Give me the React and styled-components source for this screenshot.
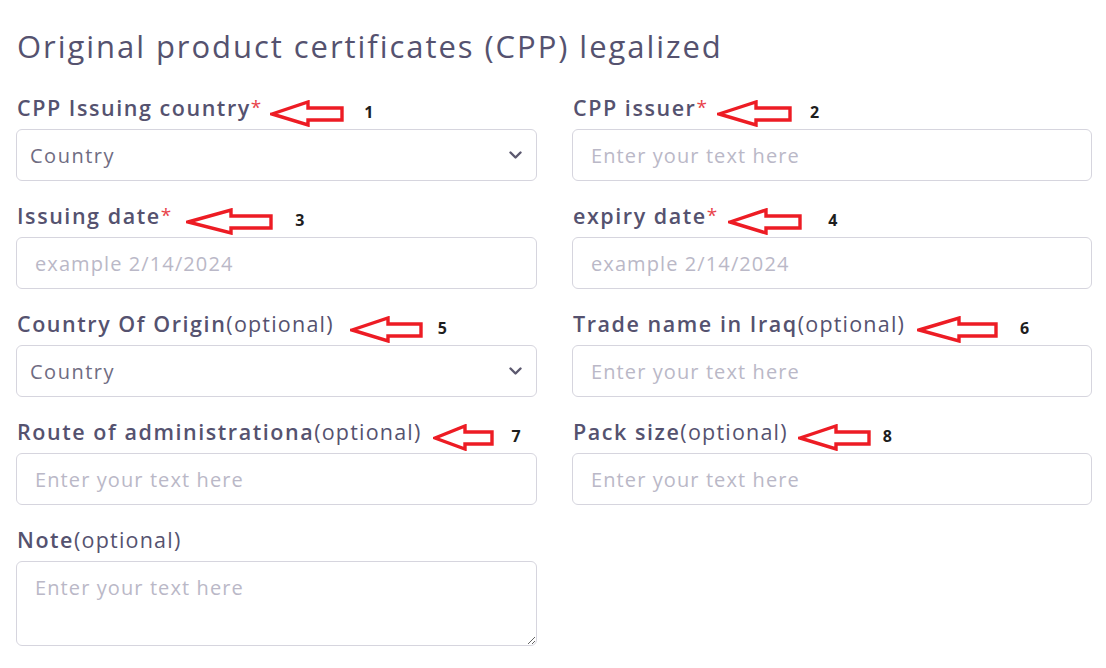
import React from 'react';
import styled, { createGlobalStyle } from 'styled-components';

const GlobalStyle = createGlobalStyle`
    body {
        margin: 0;
        background: #ffffff;
        font-family: 'Open Sans', 'Liberation Sans', sans-serif;
    }
`;

const Page = styled.div`
    padding: 26px 14px 20px 16px;
`;

const Title = styled.h1`
    margin: 0 0 27px 1px;
    font-size: 31px;
    font-weight: 400;
    letter-spacing: 1.95px;
    line-height: 40px;
    color: #55526f;
`;

const FormGrid = styled.div`
    display: grid;
    grid-template-columns: 521px 520px;
    column-gap: 35px;
    row-gap: 20px;
`;

const Field = styled.div`
    display: flex;
    flex-direction: column;
    gap: 8px;
`;

const LabelRow = styled.div`
    display: flex;
    align-items: center;
    height: 28px;
    padding-left: 1px;
`;

const Label = styled.label`
    font-size: 21.5px;
    font-weight: 600;
    letter-spacing: 1.55px;
    color: #55526f;
    white-space: nowrap;
`;

const Required = styled.span`
    color: #e8434a;
    font-weight: 400;
    letter-spacing: 0;
    font-size: 19px;
    vertical-align: 2px;
`;

const Optional = styled.span`
    font-weight: 400;
    letter-spacing: 1.2px;
    color: #55526f;
`;

const Annotation = styled.span`
    display: inline-flex;
    align-items: center;
    margin-left: ${({ gap }) => gap}px;
    margin-top: 12px;
`;

const StepNumber = styled.span`
    margin-left: ${({ gap }) => gap}px;
    font-family: 'Noto Sans', 'Open Sans', sans-serif;
    font-size: 16px;
    font-weight: 700;
    color: #1e1e1e;
    margin-top: -2px;
`;

const controlBase = `
    box-sizing: border-box;
    width: 100%;
    border: 1px solid #d6d5de;
    border-radius: 6px;
    background: #fff;
    font-family: 'Open Sans', 'Liberation Sans', sans-serif;
    font-size: 20px;
    letter-spacing: 1.1px;
    outline: none;
    color: #55526f;

    &::placeholder {
        color: #bab8c7;
    }
`;

const TextInput = styled.input`
    ${controlBase}
    height: 52px;
    padding: 0 18px;
`;

const NoteArea = styled.textarea`
    ${controlBase}
    height: 85px;
    padding: 12px 18px;
    resize: vertical;
`;

const SelectWrap = styled.div`
    position: relative;
`;

const Select = styled.select`
    ${controlBase}
    appearance: none;
    height: 52px;
    padding: 0 40px 0 13px;
    letter-spacing: 1.5px;
    color: #6f6c82;
`;

const Chevron = styled.svg`
    position: absolute;
    right: 15px;
    top: 22px;
    pointer-events: none;
`;

const Arrow = ({ width }) => {
    const h = 27;
    const headX = Math.round(width * 0.52);
    const points = [
        [2, 14], [headX, 2], [headX, 8], [width - 2, 8],
        [width - 2, 20], [headX, 20], [headX, 25]
    ].map(p => p.join(',')).join(' ');
    return (
        <svg width={width} height={h} viewBox={`0 0 ${width} ${h}`}>
            <polygon points={points} fill="#fff" stroke="#ed1c24" strokeWidth="3.4" strokeLinejoin="miter" />
        </svg>
    );
};

const Note = ({ n, arrowGap, arrowWidth, numberGap }) => (
    <Annotation gap={arrowGap}>
        <Arrow width={arrowWidth} />
        <StepNumber gap={numberGap}>{n}</StepNumber>
    </Annotation>
);

const fields = [
    { id: 'country', label: 'CPP Issuing country', required: true, type: 'select', note: { n: 1, arrowGap: 9, arrowWidth: 74, numberGap: 20 } },
    { id: 'issuer', label: 'CPP issuer', required: true, type: 'text', note: { n: 2, arrowGap: 10, arrowWidth: 75, numberGap: 18 } },
    { id: 'issuing', label: 'Issuing date', required: true, type: 'date', note: { n: 3, arrowGap: 15, arrowWidth: 87, numberGap: 22 } },
    { id: 'expiry', label: 'expiry date', required: true, type: 'date', note: { n: 4, arrowGap: 11, arrowWidth: 74, numberGap: 26 } },
    { id: 'origin', label: 'Country Of Origin', required: false, type: 'select', note: { n: 5, arrowGap: 16, arrowWidth: 73, numberGap: 15 } },
    { id: 'trade', label: 'Trade name in Iraq', required: false, type: 'text', note: { n: 6, arrowGap: 12, arrowWidth: 81, numberGap: 22 } },
    { id: 'route', label: 'Route of administrationa', required: false, type: 'text', note: { n: 7, arrowGap: 11, arrowWidth: 61, numberGap: 18 } },
    { id: 'pack', label: 'Pack size', required: false, type: 'text', note: { n: 8, arrowGap: 10, arrowWidth: 73, numberGap: 12 } },
    { id: 'note', label: 'Note', required: false, type: 'textarea' }
];

const renderControl = (f) => {
    if (f.type === 'select') {
        return (
            <SelectWrap>
                <Select id={f.id} defaultValue="">
                    <option value="">Country</option>
                </Select>
                <Chevron width="13" height="9" viewBox="0 0 13 9">
                    <path d="M1.5 1.5 L6.5 6.5 L11.5 1.5" fill="none" stroke="#5c596f" strokeWidth="2.4" strokeLinecap="round" strokeLinejoin="round" />
                </Chevron>
            </SelectWrap>
        );
    }
    if (f.type === 'textarea') {
        return <NoteArea id={f.id} placeholder="Enter your text here" />;
    }
    const placeholder = f.type === 'date' ? 'example 2/14/2024' : 'Enter your text here';
    return <TextInput id={f.id} type="text" placeholder={placeholder} />;
};

const App = () => {
    return (
        <>
            <GlobalStyle />
            <Page>
                <Title>Original product certificates (CPP) legalized</Title>
                <FormGrid>
                    {fields.map(f => (
                        <Field key={f.id}>
                            <LabelRow>
                                <Label htmlFor={f.id}>
                                    {f.label}
                                    {f.required ? <Required>*</Required> : <Optional>(optional)</Optional>}
                                </Label>
                                {f.note && <Note {...f.note} />}
                            </LabelRow>
                            {renderControl(f)}
                        </Field>
                    ))}
                </FormGrid>
            </Page>
        </>
    );
};

export default App;
